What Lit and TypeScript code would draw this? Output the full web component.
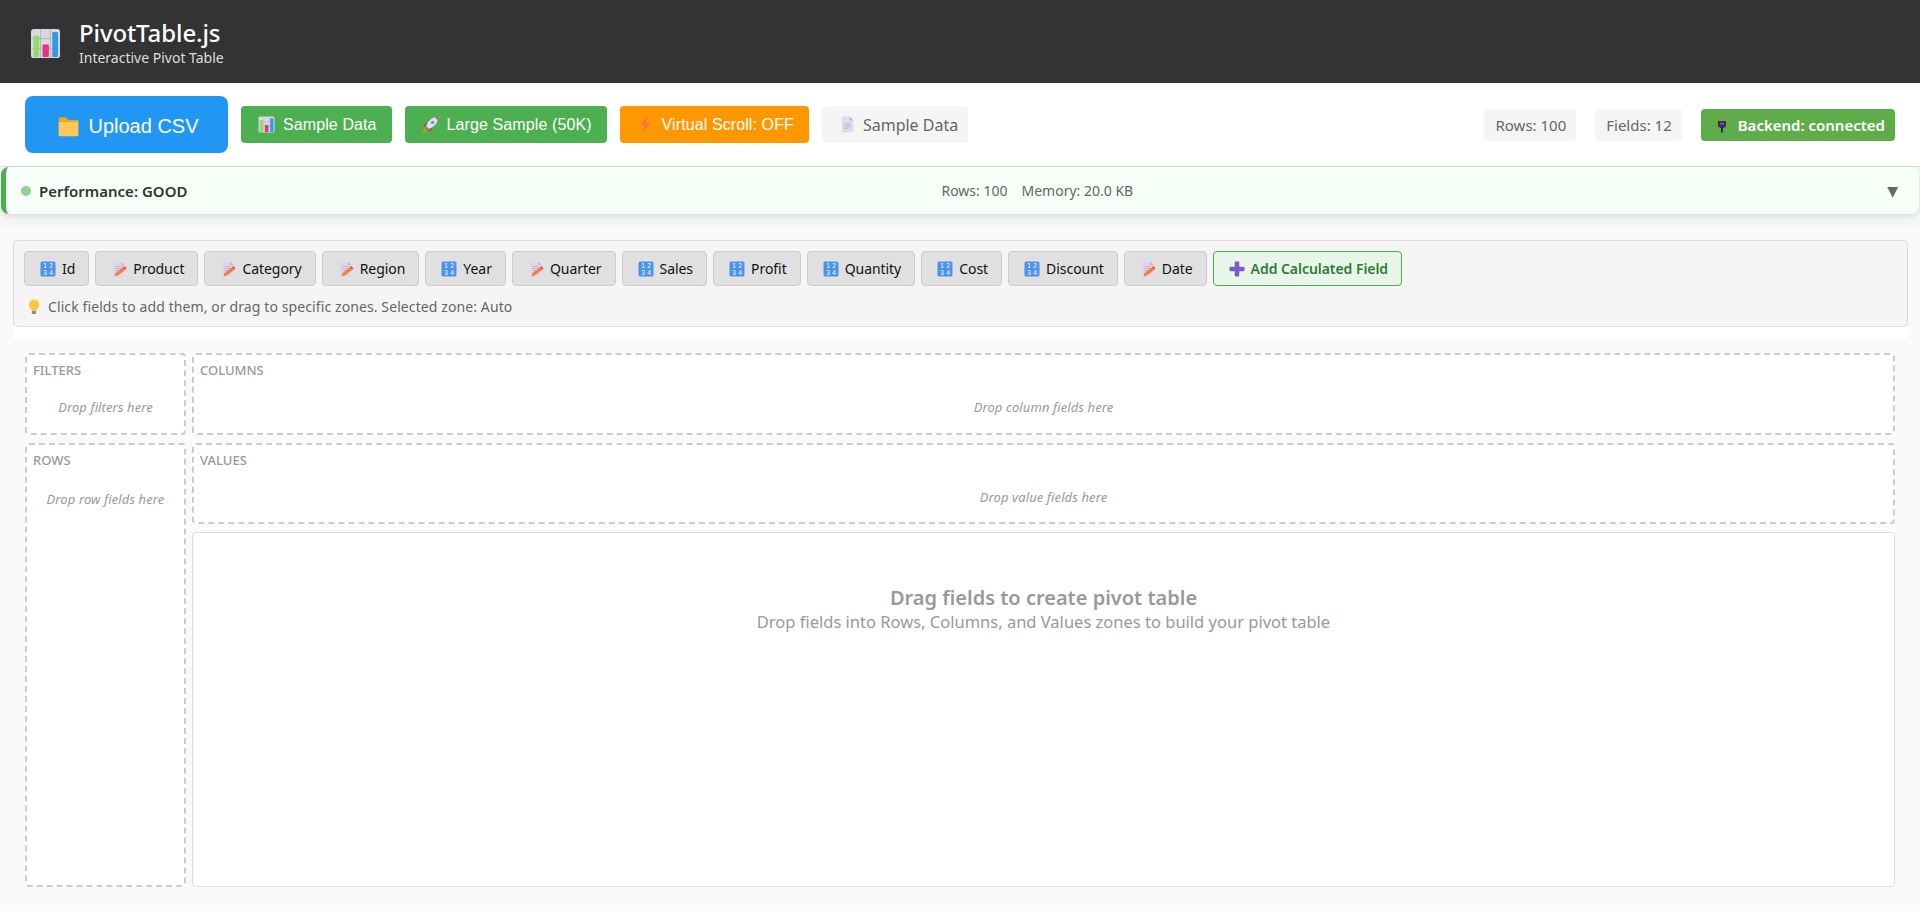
import { LitElement, html, css, svg } from 'lit';
import { customElement } from 'lit/decorators.js';

const chartIcon = svg`
  <rect x="1" y="1" width="30" height="30" rx="3" fill="#ddd6e3"/>
  <path d="M11 1v30M21 1v30M1 11h30M1 21h30" stroke="#b9b3c0" stroke-width="1"/>
  <rect x="3.500" y="8" width="6" height="22" rx="1" fill="#8fdc6c"/>
  <rect x="13" y="17" width="6.500" height="13" rx="1" fill="#e8337c"/>
  <rect x="23" y="4" width="6" height="26" rx="1" fill="#2f9be8"/>`;

const folderIcon = svg`
  <path d="M1 4a2 2 0 0 1 2-2h9l4 4h13a2 2 0 0 1 2 2v4H1z" fill="#e9a820"/>
  <path d="M1 9h30v20a2 2 0 0 1-2 2H3a2 2 0 0 1-2-2z" fill="#ffc955"/>`;

const rocketIcon = svg`
  <path d="M4 23l-3 8 8-3z" fill="#f6862c"/>
  <path d="M9 13l-6 2 1 5 6-2zM19 23l-2 6-5-1 2-6z" fill="#e8336c"/>
  <path d="M8 19C11 9 19 2 31 1c-1 12-8 20-18 23z" fill="#e3deea"/>
  <path d="M24 1.700c2-.4 4.500-.6 7-.7-.1 2.500-.4 5-1 7z" fill="#ef3f72"/>
  <circle cx="20" cy="12" r="3.200" fill="#5b9be0"/>`;

const boltIcon = svg`
  <path d="M19 1L6 18h8l-3 13 14-18h-8z" fill="#f5763f"/>`;

const docIcon = svg`
  <path d="M5 1h15l7 7v23H5z" fill="#e2d9ef"/>
  <path d="M20 1l7 7h-7z" fill="#c4b7d4"/>
  <path d="M10 15h12M10 19h12M10 23h8" stroke="#b3a7c4" stroke-width="1.500"/>`;

const plugIcon = svg`
  <path d="M12 1v8M20 1v8" stroke="#c58a3a" stroke-width="2.500"/>
  <path d="M8 8h16v10l-4 4h-8l-4-4z" fill="#3a2d55"/>
  <rect x="12" y="11" width="8" height="5" fill="#6a4f98"/>
  <rect x="14" y="21" width="4" height="10" fill="#33264a"/>`;

const numbersIcon = svg`
  <rect x="1" y="1" width="30" height="30" rx="3" fill="#4b93ea"/>
  <text x="10" y="14" class="nums">1</text><text x="22" y="14" class="nums">2</text>
  <text x="10" y="27" class="nums">3</text><text x="22" y="27" class="nums">4</text>`;

const memoIcon = svg`
  <path d="M4 1h16l7 7v23H4z" fill="#e0d6ea"/>
  <path d="M20 1l7 7h-7z" fill="#c2b4d2"/>
  <path d="M9 11h13M9 15h13M9 19h7" stroke="#b7a9c8" stroke-width="1.500"/>
  <path d="M9 24l14-11 5 5-14 11-7 2z" fill="#f4813a"/>
  <path d="M23 13l4-3 4 5-3 3z" fill="#ef4f63"/>`;

const bulbIcon = svg`
  <path d="M16 1a10.500 10.500 0 0 0-6 19c1 1 1.500 2 1.500 4h9c0-2 .5-3 1.500-4a10.500 10.500 0 0 0-6-19z" fill="#ffc83d"/>
  <rect x="11.500" y="24" width="9" height="6" rx="2" fill="#8f80a8"/>`;

const plusIcon = svg`
  <rect x="11.500" y="1" width="9" height="30" rx="2" fill="#7b5cc4"/>
  <rect x="1" y="11.500" width="30" height="9" rx="2" fill="#7b5cc4"/>`;

const icon = (glyph: unknown, size = 16) =>
  html`<svg class="icon" width=${size} height=${size} viewBox="0 0 32 32">${glyph}</svg>`;

const FIELDS: [string, boolean][] = [
  ['Id', true], ['Product', false], ['Category', false], ['Region', false],
  ['Year', true], ['Quarter', false], ['Sales', true], ['Profit', true],
  ['Quantity', true], ['Cost', true], ['Discount', true], ['Date', false],
];

@customElement('app-root')
export class AppRoot extends LitElement {
  static styles = css`
    :host {
      display: flex;
      flex-direction: column;
      height: 911px;
      overflow: hidden;
      background: #fafafa;
      font-family: 'Noto Sans', 'Open Sans', sans-serif;
      font-size: 14px;
      color: #333;
    }
    .icon { flex: none; display: block; }
    .nums { font: 400 13px 'Liberation Sans', sans-serif; fill: #fff; text-anchor: middle; }

    .header {
      height: 83px;
      box-sizing: border-box;
      background: #333;
      display: flex;
      align-items: center;
      gap: 18px;
      padding: 0 30px;
      color: #fff;
    }
    .logo { margin-top: 3px; }
    .header-text { display: flex; flex-direction: column; }
    .title { font-size: 24px; font-weight: 500; line-height: 32px; letter-spacing: -0.1px; }
    .subtitle { font-size: 14px; line-height: 17px; color: #ddd; }

    .toolbar {
      height: 84px;
      box-sizing: border-box;
      background: #fff;
      display: flex;
      align-items: center;
      padding: 0 25px;
      border-bottom: 1px solid #ddd;
      gap: 13px;
    }
    .btn {
      display: flex;
      align-items: center;
      gap: 8px;
      height: 37px;
      box-sizing: border-box;
      padding: 0 15px 0 17px;
      border-radius: 4px;
      color: #fff;
      font-family: 'Liberation Sans', Arial, sans-serif;
      font-size: 16px;
      letter-spacing: 0.1px;
    }
    .upload {
      width: 203px;
      height: 57px;
      justify-content: center;
      padding: 3px 0 0 4px;
      background: #2196f3;
      border-radius: 8px;
      font-size: 20px;
      gap: 9px;
      letter-spacing: 0;
    }
    .green { background: #4caf50; }
    .orange { background: #ff9800; }
    .muted {
      background: #f5f5f5;
      color: #666;
      font-family: 'Noto Sans', sans-serif;
      font-size: 16px;
      letter-spacing: 0;
      gap: 7px;
      padding-right: 10px;
    }
    .stats { margin-left: auto; display: flex; align-items: center; gap: 19px; font-size: 15px; }
    .stat {
      height: 32px;
      display: flex;
      align-items: center;
      padding: 0 10px 0 11px;
      border-radius: 4px;
      background: #f5f5f5;
      color: #666;
    }
    .backend {
      background: #5fad4a;
      color: #fff;
      font-weight: 600;
      gap: 8px;
      padding: 0 10px 0 13px;
    }

    .perf-wrap { background: #f5f5f5; padding-bottom: 14px; }
    .perf {
      height: 47px;
      box-sizing: border-box;
      margin: 0 1px;
      display: flex;
      justify-content: space-between;
      align-items: center;
      padding: 0 21px 0 15px;
      background: #f6fff7;
      border-left: 5px solid #4caf50;
      border-radius: 8px;
      box-shadow: 0 2px 6px rgba(0, 0, 0, 0.12);
    }
    .perf-status { display: flex; align-items: center; gap: 8px; font-weight: 600; font-size: 15px; }
    .dot { width: 10px; height: 10px; border-radius: 50%; background: #93d097; }
    .perf-metrics { display: flex; gap: 14px; color: #666; font-size: 14px; white-space: nowrap; }
    .caret { color: #666; font-size: 14px; font-family: 'DejaVu Sans', sans-serif; }

    .field-section {
      margin: 12px 12px 0 13px;
      padding-bottom: 12px;
      background: #fff;
    }
    .fields {
      height: 87px;
      box-sizing: border-box;
      padding: 10px 10px 0;
      background: #f5f5f5;
      border: 1px solid #ddd;
      border-radius: 4px;
    }
    .chips { display: flex; gap: 6px; }
    .chip {
      height: 35px;
      box-sizing: border-box;
      display: flex;
      align-items: center;
      gap: 6px;
      padding: 0 13px 0 15px;
      background: #e0e0e0;
      border: 1px solid #ccc;
      border-radius: 4px;
      color: #111;
      letter-spacing: -0.05px;
    }
    .add { background: #e8f5e9; border-color: #4caf50; color: #2e7d32; font-weight: 600; }
    .hint {
      margin-top: 11px;
      display: flex;
      align-items: center;
      gap: 6px;
      padding-left: 2px;
      color: #666;
      letter-spacing: 0.1px;
    }

    .workspace {
      flex: 1;
      display: grid;
      grid-template-columns: 161px 1fr;
      grid-template-rows: 81.5px 81.5px 1fr;
      gap: 8px 6px;
      padding: 14px 25px 24px;
      min-height: 0;
    }
    .zone {
      box-sizing: border-box;
      background: #fff;
      border: 2px dashed #ccc;
      border-radius: 4px;
      padding: 6px;
    }
    .rows { grid-row: 2 / 4; }
    .rows .zone-empty { margin-top: 21px; }
    .zone-label { font-size: 13px; line-height: 18px; font-weight: 500; color: #999; }
    .zone-empty {
      margin-top: 19px;
      text-align: center;
      font-size: 13px;
      line-height: 18px;
      font-style: italic;
      color: #999;
      letter-spacing: 0.1px;
    }
    .results {
      background: #fff;
      border: 1px solid #ddd;
      border-radius: 4px;
      text-align: center;
      color: #999;
      padding-top: 53px;
    }
    .results h3 { margin: 0; font-size: 20px; line-height: 24px; font-weight: 600; }
    .results p { margin: 1px 0 0; font-size: 16.5px; line-height: 22px; }
  `;

  private zone(label: string, hint: string, cls = '') {
    return html`<div class="zone ${cls}">
      <div class="zone-label">${label}</div>
      <div class="zone-empty">${hint}</div>
    </div>`;
  }

  render() {
    return html`
      <div class="header">
        <span class="logo">${icon(chartIcon, 31)}</span>
        <div class="header-text">
          <div class="title">PivotTable.js</div>
          <div class="subtitle">Interactive Pivot Table</div>
        </div>
      </div>

      <div class="toolbar">
        <div class="btn upload">${icon(folderIcon, 21)}Upload CSV</div>
        <div class="btn green">${icon(chartIcon, 17)}Sample Data</div>
        <div class="btn green">${icon(rocketIcon, 17)}Large Sample (50K)</div>
        <div class="btn orange">${icon(boltIcon, 17)}Virtual Scroll: OFF</div>
        <div class="btn muted">${icon(docIcon, 17)}Sample Data</div>
        <div class="stats">
          <div class="stat">Rows: 100</div>
          <div class="stat">Fields: 12</div>
          <div class="stat backend">${icon(plugIcon)}Backend: connected</div>
        </div>
      </div>

      <div class="perf-wrap">
        <div class="perf">
          <div class="perf-status"><span class="dot"></span>Performance: GOOD</div>
          <div class="perf-metrics"><span>Rows: 100</span><span>Memory: 20.0 KB</span></div>
          <div class="caret">▼</div>
        </div>
      </div>

      <div class="field-section">
        <div class="fields">
          <div class="chips">
            ${FIELDS.map(([name, numeric]) => html`
              <div class="chip">${icon(numeric ? numbersIcon : memoIcon)}${name}</div>`)}
            <div class="chip add">${icon(plusIcon)}Add Calculated Field</div>
          </div>
          <div class="hint">${icon(bulbIcon)}Click fields to add them, or drag to specific zones. Selected zone: Auto</div>
        </div>
      </div>

      <div class="workspace">
        ${this.zone('FILTERS', 'Drop filters here')}
        ${this.zone('COLUMNS', 'Drop column fields here')}
        ${this.zone('ROWS', 'Drop row fields here', 'rows')}
        ${this.zone('VALUES', 'Drop value fields here')}
        <div class="results">
          <h3>Drag fields to create pivot table</h3>
          <p>Drop fields into Rows, Columns, and Values zones to build your pivot table</p>
        </div>
      </div>
    `;
  }
}
